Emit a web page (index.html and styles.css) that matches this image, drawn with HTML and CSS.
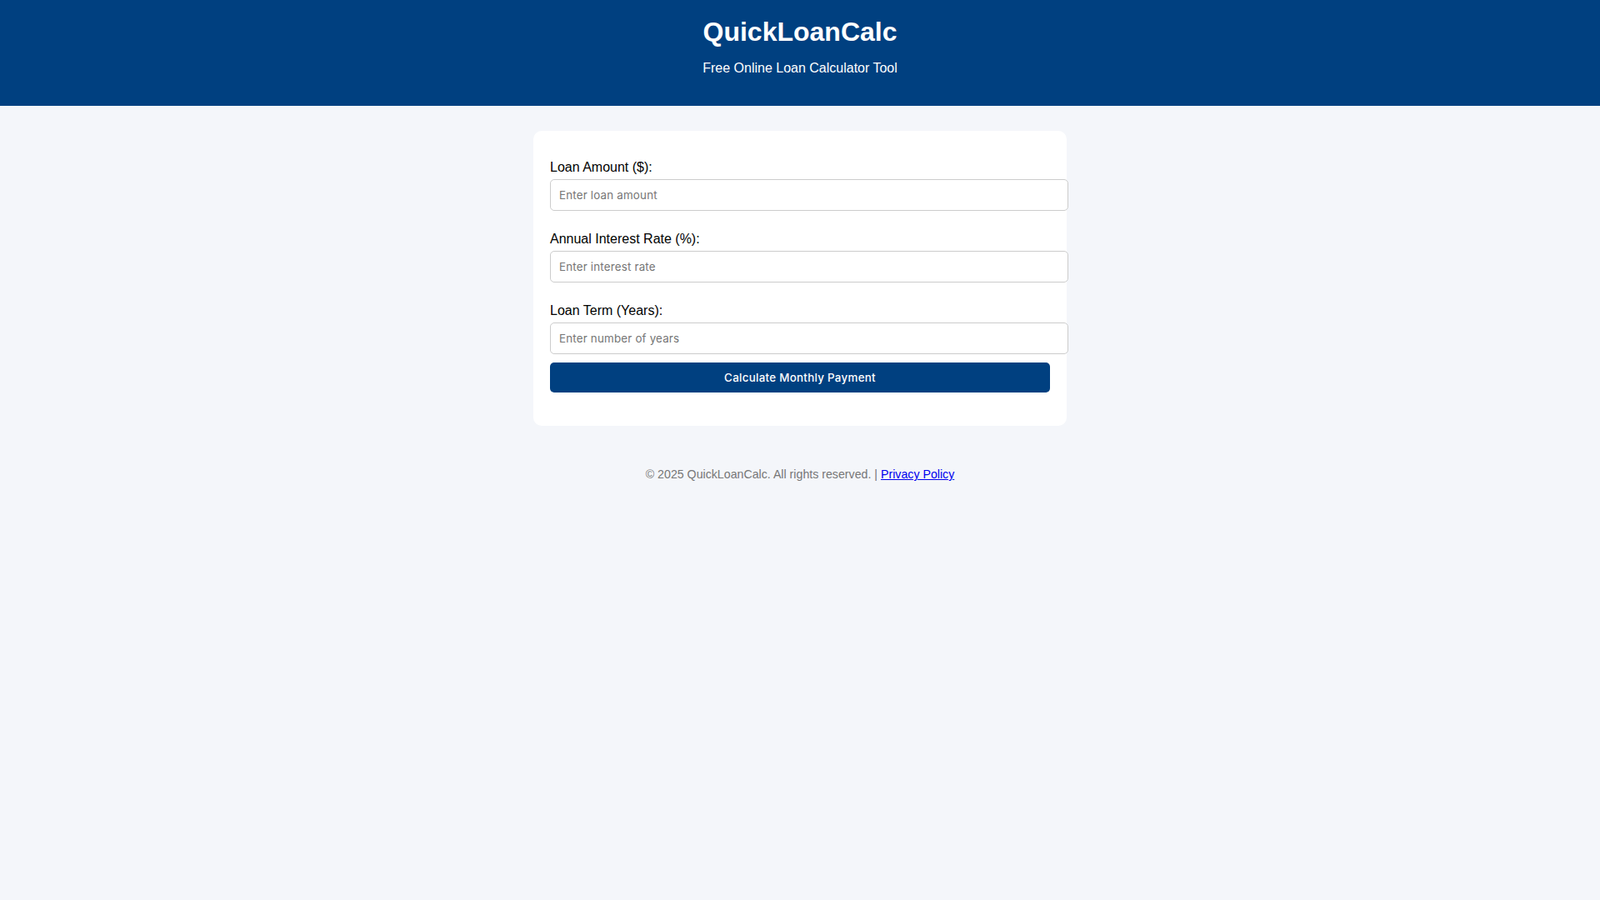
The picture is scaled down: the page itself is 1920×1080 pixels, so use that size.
FILE: index.html
```html
<!DOCTYPE html>
<html lang="en">
<head>
<meta charset="UTF-8">
<title>QuickLoanCalc - Free Online Loan Calculator</title>
<link rel="stylesheet" href="styles.css">
</head>
<body>
<header class="site-header">
  <h1 class="site-title">QuickLoanCalc</h1>
  <p class="site-tagline">Free Online Loan Calculator Tool</p>
</header>
<main class="calculator">
  <div class="field-group">
    <label class="field-label" for="amount">Loan Amount ($):</label>
    <input class="field-input" type="number" id="amount" placeholder="Enter loan amount">
  </div>
  <div class="field-group">
    <label class="field-label" for="rate">Annual Interest Rate (%):</label>
    <input class="field-input" type="number" id="rate" placeholder="Enter interest rate">
  </div>
  <div class="field-group">
    <label class="field-label" for="years">Loan Term (Years):</label>
    <input class="field-input" type="number" id="years" placeholder="Enter number of years">
  </div>
  <button class="calc-button" type="button">Calculate Monthly Payment</button>
  <div class="result"></div>
</main>
<footer class="site-footer">
  © 2025 QuickLoanCalc. All rights reserved. | <a class="footer-link" href="#">Privacy Policy</a>
</footer>
</body>
</html>
```
FILE: styles.css
```css
body {
  margin: 0;
  background: #f4f6fa;
  font-family: "Liberation Sans", Arial, sans-serif;
  color: #000;
}

.site-header {
  background: #004080;
  color: #fff;
  text-align: center;
  padding: 20px;
}

.site-title {
  margin: 0;
  font-size: 32px;
  font-weight: bold;
}

.site-tagline {
  margin: 16px 0;
  font-size: 16px;
}

.calculator {
  max-width: 600px;
  margin: 30px auto;
  background: #fff;
  padding: 20px;
  border-radius: 10px;
}

.field-group {
  padding-top: 15px;
}

.field-label {
  display: block;
  margin-bottom: 5px;
  font-size: 16px;
}

.field-input {
  display: block;
  width: 100%;
  padding: 10px;
  margin: 0 0 10px;
  border: 1px solid #ccc;
  border-radius: 5px;
  font-family: Inter, "Noto Sans", sans-serif;
  font-size: 13.333px;
  letter-spacing: 0.2px;
  background: #fff;
}

.field-input::placeholder {
  color: #757575;
}

.calc-button {
  display: block;
  width: 100%;
  padding: 10px;
  background: #004080;
  color: #fff;
  border: none;
  border-radius: 5px;
  font-family: Inter, "Noto Sans", sans-serif;
  font-size: 13.333px;
  font-weight: 500;
  letter-spacing: 0.3px;
  cursor: pointer;
}

.result {
  margin-top: 20px;
}

.site-footer {
  text-align: center;
  padding: 20px;
  font-size: 14.2px;
  color: #777;
}

.footer-link {
  color: #0000ee;
}
```
